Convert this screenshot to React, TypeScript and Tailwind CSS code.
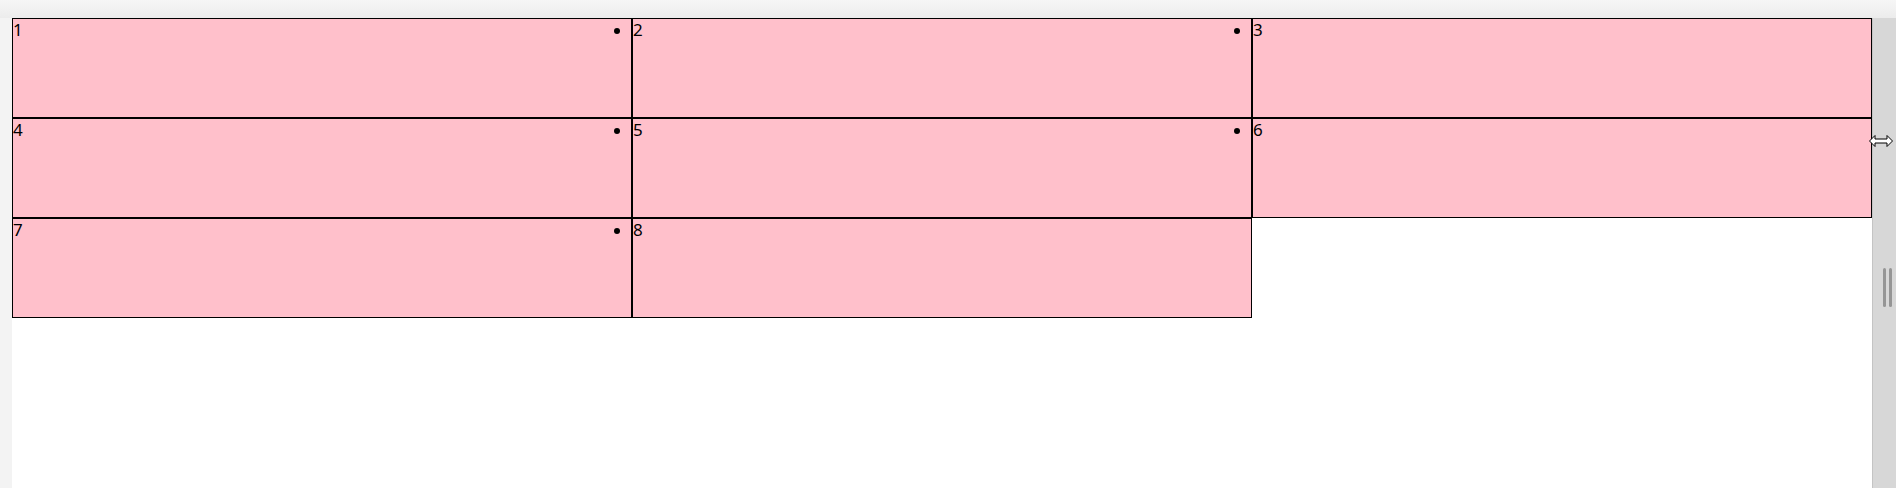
import React from "react";

const cells = [1, 2, 3, 4, 5, 6, 7, 8];

const ResizeCursor: React.FC = () => (
  <svg
    className="absolute left-[1868px] top-[134px]"
    width="26"
    height="14"
    viewBox="0 0 26 14"
  >
    <path
      d="M1.5 7 L7 1.5 L7 5 L19 5 L19 1.5 L24.5 7 L19 12.5 L19 9 L7 9 L7 12.5 Z"
      fill="#fff"
      stroke="#000"
      strokeWidth="1"
      strokeLinejoin="miter"
    />
  </svg>
);

export default function App() {
  return (
    <div className="relative flex h-[488px] w-full flex-col overflow-hidden bg-[#f3f3f3] font-['Noto_Sans',sans-serif]">
      {/* top strip */}
      <div className="h-[18px] shrink-0 bg-gradient-to-b from-[#f6f6f6] to-[#ececec]" />

      <div className="flex flex-1 pl-[12px]">
        {/* page */}
        <main className="flex-1 bg-white">
          <ul className="grid grid-cols-[repeat(3,620px)]">
            {cells.map((n, i) => (
              <li
                key={n}
                className="relative h-[100px] border border-black bg-[#ffc0cb] text-[17px] leading-[22px] text-black"
              >
                {i % 3 !== 0 && (
                  <span className="absolute left-[-19px] top-[9px] h-[6px] w-[6px] rounded-full bg-black" />
                )}
                {n}
              </li>
            ))}
          </ul>
        </main>

        {/* resize handle */}
        <div className="relative w-[24px] shrink-0 border-l border-[#c4c4c4] bg-[#d7d7d7]">
          <div className="absolute left-[10px] top-[250px] flex gap-[3px]">
            <div className="h-[39px] w-[3px] rounded-full bg-[#959595]" />
            <div className="h-[39px] w-[3px] rounded-full bg-[#959595]" />
          </div>
        </div>
      </div>

      <ResizeCursor />
    </div>
  );
}
